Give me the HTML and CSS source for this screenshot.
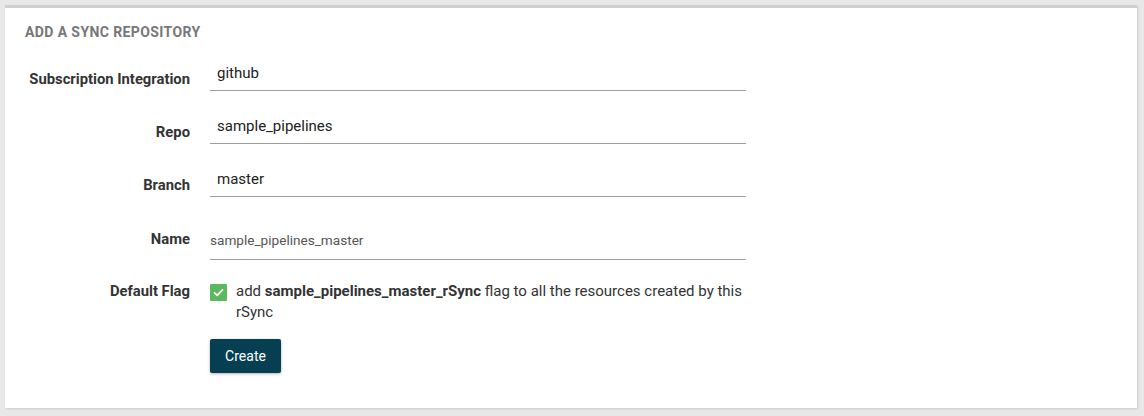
FILE: index.html
```html
<!DOCTYPE html>
<html>
<head>
<meta charset="utf-8">
<link rel="stylesheet" href="styles.css">
</head>
<body>
<div class="panel">
  <div class="panel-title">ADD A SYNC REPOSITORY</div>
  <div class="form">
    <div class="row">
      <div class="label">Subscription Integration</div>
      <div class="field"><span class="value">github</span></div>
    </div>
    <div class="row">
      <div class="label">Repo</div>
      <div class="field"><span class="value">sample_pipelines</span></div>
    </div>
    <div class="row">
      <div class="label">Branch</div>
      <div class="field"><span class="value">master</span></div>
    </div>
    <div class="row row-name">
      <div class="label">Name</div>
      <div class="field field-name"><span class="value">sample_pipelines_master</span></div>
    </div>
    <div class="row row-flag">
      <div class="label">Default Flag</div>
      <div class="flag">
        <span class="check"><svg width="17" height="17" viewBox="0 0 17 17"><path d="M4.6 8.9 L7.3 11.4 L12.4 5.8" fill="none" stroke="#fff" stroke-width="1.8" stroke-linecap="round" stroke-linejoin="round"/></svg></span>
        <span class="flag-text">add <b>sample_pipelines_master_rSync</b> flag to all the resources created by this rSync</span>
      </div>
    </div>
    <div class="row row-btn">
      <div class="label"></div>
      <button class="btn">Create</button>
    </div>
  </div>
</div>
</body>
</html>
```
FILE: styles.css
```css
html, body {
  margin: 0;
  padding: 0;
}
body {
  background: #e8e8e8;
  font-family: Roboto, "Noto Sans", sans-serif;
  color: #333;
  padding: 5px 7px 8px 5px;
}
.panel {
  background: #fff;
  border-top: 3px solid #cfcfcf;
  box-shadow: 1px 1px 2px rgba(0,0,0,0.12);
  padding: 16px 20px 35px 20px;
}
.panel-title {
  font-size: 14px;
  line-height: 16px;
  font-weight: 700;
  color: #777;
  letter-spacing: 0.4px;
}
.form {
  margin-top: 16px;
}
.row {
  display: flex;
  margin-bottom: 18px;
}
.label {
  width: 165px;
  flex: none;
  text-align: right;
  font-size: 14.8px;
  font-weight: 700;
  line-height: 20px;
  padding-top: 13px;
  margin-right: 20px;
  color: #333;
}
.field {
  width: 536px;
  height: 35px;
  border-bottom: 1px solid #9e9e9e;
  display: flex;
  align-items: center;
  padding-left: 7px;
  box-sizing: border-box;
}
.value {
  font-size: 15px;
  color: #212121;
}
.row-name .label {
  padding-top: 14px;
}
.field-name {
  height: 45px;
  padding-left: 0;
  padding-top: 6px;
}
.field-name .value {
  font-size: 13.6px;
  color: #555;
}
.row-name {
  margin-bottom: 21px;
}
.row-flag .label {
  padding-top: 0;
  line-height: 21px;
}
.flag {
  display: flex;
  align-items: flex-start;
  width: 536px;
}
.check {
  width: 17px;
  height: 17px;
  background: #5cb85c;
  border-radius: 1px;
  margin-top: 3px;
  margin-right: 9px;
  flex: none;
  display: block;
}
.check svg {
  display: block;
}
.flag-text {
  font-size: 15px;
  line-height: 21px;
  width: 512px;
  color: #333;
}
.flag-text b {
  font-weight: 700;
}
.row-flag {
  margin-bottom: 16px;
}
.row-btn {
  margin-bottom: 0;
}
.row-btn .label {
  padding-top: 0;
}
.btn {
  width: 71px;
  height: 34px;
  background: #073f52;
  color: #fff;
  border: none;
  border-radius: 2px;
  font-family: Roboto, "Noto Sans", sans-serif;
  font-size: 14px;
  padding: 0;
  box-shadow: 0 1px 3px rgba(0,0,0,0.3);
}
```
